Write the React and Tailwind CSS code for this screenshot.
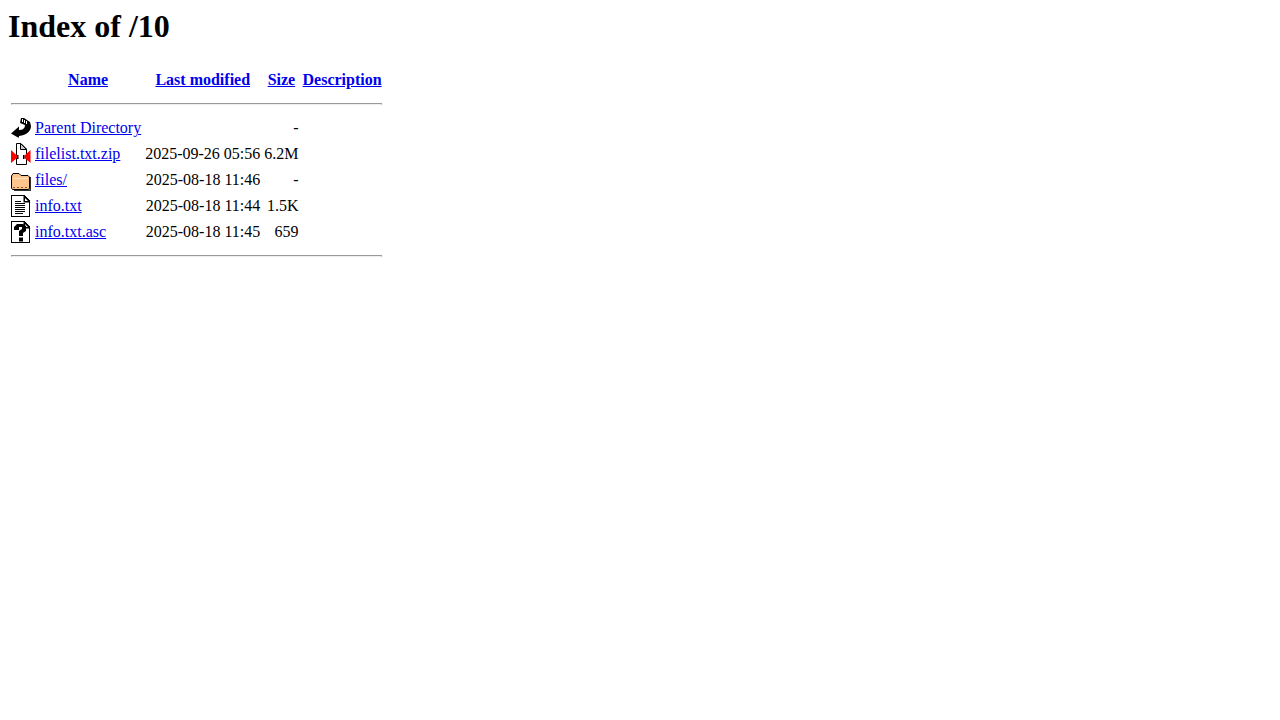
const rows = [
  { icon: "back", name: "Parent Directory", date: "", size: "-" },
  { icon: "zip", name: "filelist.txt.zip", date: "2025-09-26 05:56", size: "6.2M" },
  { icon: "folder", name: "files/", date: "2025-08-18 11:46", size: "-" },
  { icon: "text", name: "info.txt", date: "2025-08-18 11:44", size: "1.5K" },
  { icon: "unknown", name: "info.txt.asc", date: "2025-08-18 11:45", size: "659" },
];

function Page({ children }) {
  return (
    <g>
      <path d="M0.5 0.5H13L18.5 6V21.5H0.5Z" fill="#fff" stroke="#000" shapeRendering="crispEdges" />
      <path d="M12.5 0.5V7.5H19.5Z" fill="#000" />
      <path d="M14 3V6H17Z" fill="#fff" />
      {children}
    </g>
  );
}

function Icon({ type }) {
  return (
    <svg width="20" height="22" viewBox="0 0 20 22" className="block">
      {type === "back" && (
        <g>
          <path d="M0 16.5L8 9.5V13C11 13 14 12 14 8L9 6L10 1H13L19 5L20 9C20 14 16 18 8 19V20.5H7Z" fill="#000" />
          <path d="M11 2h1v3h-1zM13 3h1v3h-1zM15 4h1v3h-1z" fill="#fff" />
        </g>
      )}
      {type === "zip" && (
        <g>
          <path d="M5.5 0.5H10L15.5 6V21.5H5.5Z" fill="#fff" stroke="#000" />
          <path d="M9.5 0.5V6.5H15.5Z" fill="#ccc" stroke="#000" />
          <path d="M0 7L6 12.5V15L0 20Z M19.5 7L13.5 12.5V15L19.5 20Z" fill="#f00" />
          <path d="M6 12h1.5v4H6zM12 12h1.5v4H12z" fill="#000" />
        </g>
      )}
      {type === "folder" && (
        <g>
          <path d="M3 22H20V8H18.5V20.5H3Z" fill="#333" />
          <path d="M0.5 7L2 4.5H8L10 6.5H17L18.5 8V19L17.5 20.5H1.5L0.5 19Z" fill="#fdc68f" stroke="#000" />
          <path d="M2 9h15v1H2z" fill="#ffe3c2" />
          <path d="M2 18h2v1H2zM6 18h2v1H6zM10 18h2v1h-2zM14 18h2v1h-2z" fill="#8a5a2b" />
        </g>
      )}
      {type === "text" && (
        <Page>
          <path d="M4 6h6v1H4zM4 8h10v1H4zM4 10h10v1H4zM4 12h10v1H4zM4 14h10v1H4zM4 16h10v1H4zM4 18h8v1H4z" fill="#000" />
        </Page>
      )}
      {type === "unknown" && (
        <Page>
          <path d="M3 6L6 3H12L15 5V10L12 12V15H8V10L11 8V6H8V9H3ZM8 16.5H12V20.5H8Z" fill="#000" />
        </Page>
      )}
    </svg>
  );
}

const linkClass = "text-[#0000ee] underline";
const ruleClass = "my-2 h-0 border border-[#9a9a9a] border-b-[#eeeeee]";

export default function App() {
  return (
    <div className="p-2 bg-white min-h-screen text-black text-base font-['Liberation_Serif',serif] leading-[normal]">
      <h1 className="text-[32px] font-bold leading-[37px] mb-[21.44px]">Index of /10</h1>
      <table className="border-separate border-spacing-[2px]">
        <tbody>
          <tr>
            <th className="p-px">
              <div className="w-5 h-[22px]" />
            </th>
            <th className="p-px"><a href="#" className={linkClass}>Name</a></th>
            <th className="p-px"><a href="#" className={linkClass}>Last modified</a></th>
            <th className="p-px"><a href="#" className={linkClass}>Size</a></th>
            <th className="p-px"><a href="#" className={linkClass}>Description</a></th>
          </tr>
          <tr>
            <th colSpan={5} className="p-px">
              <hr className={ruleClass} />
            </th>
          </tr>
          {rows.map((row) => (
            <tr key={row.name}>
              <td className="p-px align-top"><Icon type={row.icon} /></td>
              <td className="p-px"><a href="#" className={linkClass}>{row.name}</a></td>
              <td className="p-px text-right">{row.date || "\u00a0"}</td>
              <td className="p-px text-right">{row.size}</td>
              <td className="p-px">&nbsp;</td>
            </tr>
          ))}
          <tr>
            <th colSpan={5} className="p-px">
              <hr className={ruleClass} />
            </th>
          </tr>
        </tbody>
      </table>
    </div>
  );
}
